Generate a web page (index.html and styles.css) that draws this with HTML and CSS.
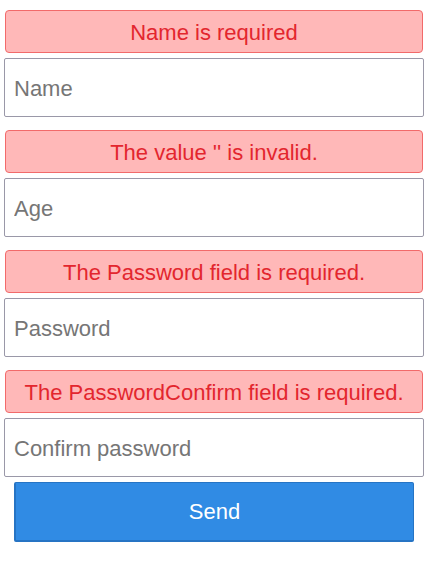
FILE: index.html
```html
<!DOCTYPE html>
<html>
<head>
<meta charset="utf-8">
<link rel="stylesheet" href="styles.css">
</head>
<body>
<form class="form">
  <div class="field">
    <div class="error">Name is required</div>
    <input class="input" type="text" placeholder="Name">
  </div>
  <div class="field">
    <div class="error">The value '' is invalid.</div>
    <input class="input" type="text" placeholder="Age">
  </div>
  <div class="field">
    <div class="error">The Password field is required.</div>
    <input class="input" type="password" placeholder="Password">
  </div>
  <div class="field last">
    <div class="error">The PasswordConfirm field is required.</div>
    <input class="input" type="password" placeholder="Confirm password">
  </div>
  <button class="send" type="button">Send</button>
</form>
</body>
</html>
```

FILE: styles.css
```css
html, body {
  margin: 0;
  padding: 0;
  background: #ffffff;
}
.form {
  display: flex;
  flex-direction: column;
  padding: 10px 6px 0 4px;
  font-family: "Liberation Sans", Arial, sans-serif;
  font-size: 22px;
}
.field {
  display: flex;
  flex-direction: column;
  gap: 5px;
  margin-bottom: 13px;
}
.field.last {
  margin-bottom: 5px;
}
.error {
  box-sizing: border-box;
  height: 43px;
  margin: 0 1px;
  padding-top: 2px;
  display: flex;
  align-items: center;
  justify-content: center;
  background: #ffb8b8;
  border: 1px solid #f26a6a;
  border-radius: 4px;
  color: #e3262e;
  font-size: 22px;
}
.input {
  box-sizing: border-box;
  height: 59px;
  width: 100%;
  margin: 0;
  padding: 3px 9px 0;
  border: 1px solid #9a98a8;
  border-radius: 2px;
  font-family: "Liberation Sans", Arial, sans-serif;
  font-size: 22px;
  color: #333;
  background: #fff;
  outline: none;
}
.input::placeholder {
  color: #767676;
}
.send {
  box-sizing: border-box;
  height: 60px;
  margin: 0 10px;
  padding-top: 2px;
  background: #308be4;
  border: 1px solid #2674c4;
  border-bottom-width: 2px;
  border-left-width: 2px;
  border-radius: 2px;
  color: #ffffff;
  font-family: "Liberation Sans", Arial, sans-serif;
  font-size: 22px;
}
```
